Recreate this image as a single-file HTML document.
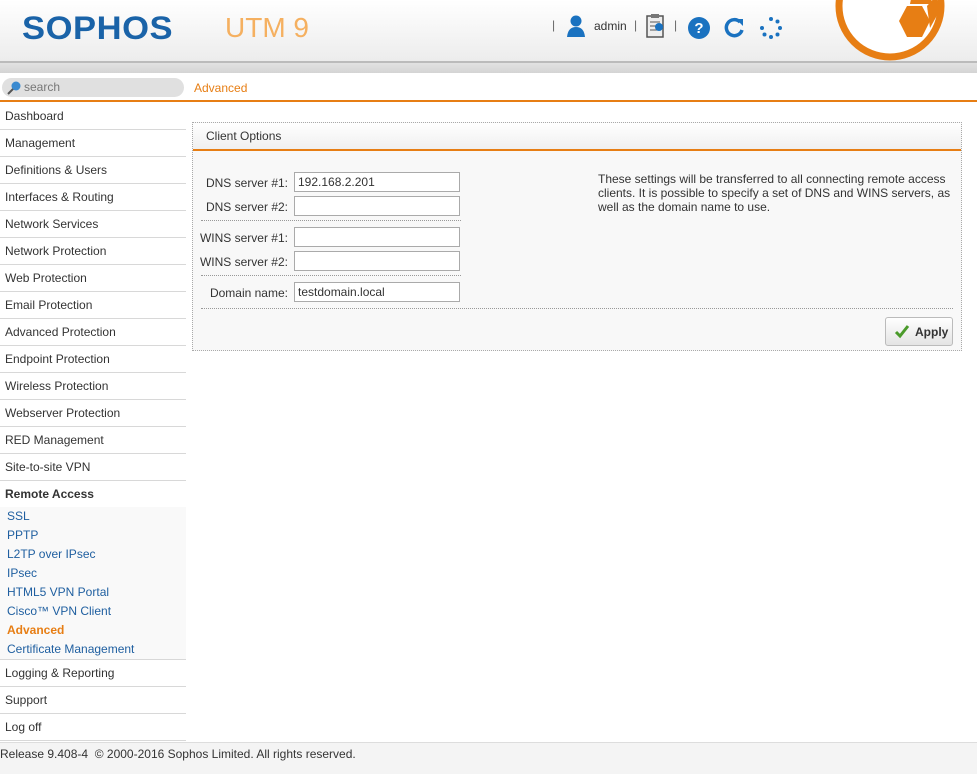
<!DOCTYPE html>
<html><head><style>
*{box-sizing:border-box;margin:0;padding:0}
body{width:977px;height:774px;overflow:hidden;background:#fff;font-family:"Liberation Sans",Arial,sans-serif;font-size:12px;color:#333;position:relative}
.hdr{position:absolute;left:0;top:0;width:977px;height:63px;background:linear-gradient(#fff,#ececec);border-bottom:2px solid #bbb}
.band{position:absolute;left:0;top:63px;width:977px;height:10px;background:linear-gradient(#e2e2e2,#d4d4d4)}
.logo{position:absolute;left:22px;top:10px;font:bold 32px "Liberation Sans",sans-serif;color:#1a63a8;letter-spacing:0.5px;transform:scaleX(1.08);transform-origin:left}
.utm{position:absolute;left:225px;top:12px;font:28px "Liberation Sans",sans-serif;color:#f5b060;font-weight:300}
.tools{position:absolute;left:552px;top:16px;height:24px;font-size:12px;color:#333}
.search{position:absolute;left:2px;top:78px;width:182px;height:19px;border-radius:10px;background:#e0e0e0;color:#777;padding-left:22px;line-height:19px;font-size:12px}
.crumb{position:absolute;left:194px;top:81px;color:#e77e14;font-size:12px}
.oline{position:absolute;left:0;top:100px;width:977px;height:2px;background:#e77e14}
.nav{position:absolute;left:0;top:103px;width:186px}
.nav .it{height:27px;line-height:27px;padding-left:5px;border-bottom:1px solid #d8d8d8;color:#333;font-size:12px;background:#fff}
.nav .sec{font-weight:bold;border-bottom:none;height:26px}
.sub{background:#f9f9f9;padding:0 0 0 7px;border-bottom:1px solid #d8d8d8}
.sub div{height:19px;line-height:19px;color:#1f5fa0;font-size:12px}
.sub .a{color:#e77e14;font-weight:bold}
.foot{position:absolute;left:0;top:742px;width:977px;height:32px;background:#f4f4f4;border-top:1px solid #ddd;padding:4px 0 0 0;font-size:12px;color:#333}
.panel{position:absolute;left:192px;top:122px;width:770px;height:229px;border:1px dotted #aaa;background:#f8f8f8}
.ph{height:28px;background:linear-gradient(#fff,#f0f0f0);border-bottom:2px solid #e77e14;padding:6px 0 0 13px;font-size:12px}
.lbl{position:absolute;right:673px;font-size:12px;text-align:right}
.inp{position:absolute;left:101px;width:166px;height:20px;border:1px solid #aaa;background:#fff;padding:2px 3px;font-size:12px}
.sep{position:absolute;left:8px;width:260px;border-top:1px dotted #999}
.help{position:absolute;left:405px;top:49px;width:360px;font-size:12px;line-height:14px}
.btn{position:absolute;left:692px;top:194px;width:68px;height:29px;border:1px solid #bbb;border-radius:3px;background:linear-gradient(#fff,#e4e4e4);font-weight:bold;font-size:12px;padding:7px 0 0 29px}
</style></head><body>
<div class="hdr">
<div class="logo">SOPHOS</div>
<div class="utm">UTM 9</div>
<div class="tools">
<span style="position:absolute;left:0;top:2px;color:#666">|</span>
<svg style="position:absolute;left:12px;top:-2px" width="24" height="24" viewBox="0 0 24 24"><circle cx="12" cy="7" r="5.5" fill="#1a72c0"/><path d="M3 23 Q4 13 12 13 Q20 13 21 23Z" fill="#1a72c0"/></svg>
<span style="position:absolute;left:42px;top:3px">admin</span>
<span style="position:absolute;left:82px;top:2px;color:#666">|</span>
<svg style="position:absolute;left:93px;top:-3px" width="22" height="26" viewBox="0 0 22 26"><rect x="2" y="3" width="16" height="21" fill="#eee" stroke="#555" stroke-width="1.5"/><rect x="6" y="1" width="8" height="4" fill="#777"/><path d="M5 9h10M5 13h10M5 17h8" stroke="#555"/><circle cx="14" cy="14" r="4" fill="#1a72c0"/></svg>
<span style="position:absolute;left:122px;top:2px;color:#666">|</span>
<svg style="position:absolute;left:135px;top:0" width="24" height="24"><circle cx="12" cy="12" r="11" fill="#1a72c0"/><text x="12" y="17" font-size="15" font-weight="bold" fill="#fff" text-anchor="middle" font-family="Liberation Sans">?</text></svg>
<svg style="position:absolute;left:170px;top:0" width="24" height="24" viewBox="0 0 24 24"><path d="M18 6 A8 8 0 1 0 20 14" fill="none" stroke="#1a72c0" stroke-width="3.5"/><path d="M14 3 L21 3 L21 10Z" fill="#1a72c0"/></svg>
<svg style="position:absolute;left:207px;top:0" width="24" height="24"><g fill="#1a72c0"><circle cx="12" cy="3" r="2"/><circle cx="18.5" cy="5.5" r="2"/><circle cx="21" cy="12" r="2"/><circle cx="18.5" cy="18.5" r="2"/><circle cx="12" cy="21" r="2"/><circle cx="5.5" cy="18.5" r="2"/><circle cx="3" cy="12" r="2"/></g></svg>
</div>
<svg style="position:absolute;left:830px;top:0" width="125" height="63" viewBox="0 0 125 63"><circle cx="60" cy="6" r="51" fill="#fff" stroke="#e77e14" stroke-width="7"/><polygon points="77,6 92,6 100,21 92,37 77,37 69,21" fill="#e77e14"/><polygon points="82,-6 97,-6 104,4 92,4 80,4" fill="#e77e14"/><polygon points="97,6 106,-4 110,10 100,28" fill="#e77e14"/></svg>
</div>
<div class="band"></div>
<div class="search"><svg style="position:absolute;left:5px;top:2px" width="14" height="15"><circle cx="9" cy="6" r="4.5" fill="#3a8ad0"/><path d="M6 9 L1 14" stroke="#555" stroke-width="2"/></svg>search</div>
<div class="crumb">Advanced</div>
<div class="oline"></div>
<div class="nav">
<div class="it">Dashboard</div><div class="it">Management</div><div class="it">Definitions &amp; Users</div><div class="it">Interfaces &amp; Routing</div><div class="it">Network Services</div><div class="it">Network Protection</div><div class="it">Web Protection</div><div class="it">Email Protection</div><div class="it">Advanced Protection</div><div class="it">Endpoint Protection</div><div class="it">Wireless Protection</div><div class="it">Webserver Protection</div><div class="it">RED Management</div><div class="it">Site-to-site VPN</div>
<div class="it sec">Remote Access</div>
<div class="sub"><div>SSL</div><div>PPTP</div><div>L2TP over IPsec</div><div>IPsec</div><div>HTML5 VPN Portal</div><div>Cisco™ VPN Client</div><div class="a">Advanced</div><div>Certificate Management</div></div>
<div class="it">Logging &amp; Reporting</div><div class="it">Support</div><div class="it">Log off</div>
</div>
<div class="panel">
<div class="ph">Client Options</div>
<div class="lbl" style="top:53px">DNS server #1:</div><div class="inp" style="top:49px">192.168.2.201</div>
<div class="lbl" style="top:77px">DNS server #2:</div><div class="inp" style="top:73px"></div>
<div class="sep" style="top:97px"></div>
<div class="lbl" style="top:108px">WINS server #1:</div><div class="inp" style="top:104px"></div>
<div class="lbl" style="top:132px">WINS server #2:</div><div class="inp" style="top:128px"></div>
<div class="sep" style="top:152px"></div>
<div class="lbl" style="top:163px">Domain name:</div><div class="inp" style="top:159px">testdomain.local</div>
<div class="sep" style="top:185px;width:752px"></div>
<div class="help">These settings will be transferred to all connecting remote access clients. It is possible to specify a set of DNS and WINS servers, as well as the domain name to use.</div>
<div class="btn"><svg style="position:absolute;left:8px;top:6px" width="16" height="15"><path d="M2 8 L6 12 L14 2" fill="none" stroke="#4a9a2a" stroke-width="3"/></svg>Apply</div>
</div>
<div class="foot">Release 9.408-4 &nbsp;© 2000-2016 Sophos Limited. All rights reserved.</div>
</body></html>
